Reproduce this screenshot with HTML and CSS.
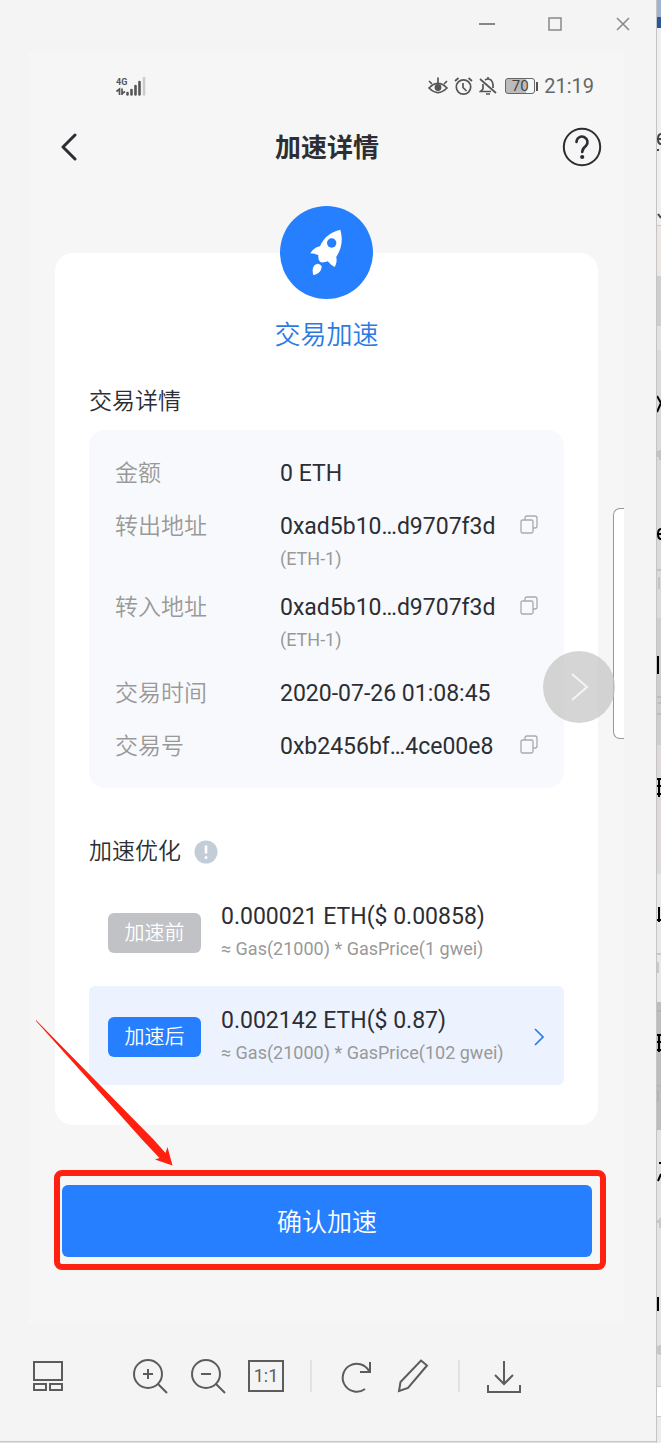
FILE: index.html
```html
<!DOCTYPE html>
<html lang="zh-CN">
<head>
    <meta charset="UTF-8">
    <meta name="viewport" content="width=device-width, initial-scale=1.0">
    <title>加速详情</title>
    <link rel="stylesheet" href="styles.css">
</head>
<body>
    <div class="window">
        <header class="titlebar">
            <button type="button" aria-label="最小化">
                <svg width="16" height="16" viewBox="0 0 16 16"><path d="M0 8h16" stroke-width="2"/></svg>
            </button>
            <button type="button" aria-label="最大化">
                <svg width="16" height="16" viewBox="0 0 16 16"><path d="M2 2h12v12H2z"/></svg>
            </button>
            <button type="button" aria-label="关闭">
                <svg width="16" height="16" viewBox="0 0 16 16"><path d="M2 2l12 12M14 2L2 14"/></svg>
            </button>
        </header>

        <main class="phone">
            <div class="status">
                <svg class="signal" width="30" height="20" viewBox="0 0 30 20">
                    <text x="0" y="9">4G</text>
                    <path d="M3.500 19v-6L0.500 15.500M6 12.500V19M6 17.500L9 15.500" fill="none" stroke="#555" stroke-width="1.700"/>
                    <path d="M11.500 17v1.500M15.500 14v4.500M19.500 10v8.500M23.500 6v12.500" fill="none" stroke="#555" stroke-width="2.600" stroke-linecap="round"/>
                    <path d="M28 2v16.500" stroke="#ccc" stroke-width="2.600" stroke-linecap="round"/>
                </svg>
                <div class="status-right">
                    <svg width="20" height="20" viewBox="0 0 20 20">
                        <path d="M1 12q9-9 18 0-9 9-18 0zM1 5l3 3M19 5l-3 3M10 1.500V7"/>
                        <circle cx="10" cy="11.500" r="3.400" class="solid"/>
                    </svg>
                    <svg width="19" height="20" viewBox="0 0 19 20">
                        <circle cx="9.500" cy="11" r="7.200"/>
                        <path d="M9 7v4.500l3.500 3.500M1 5l3.500-3M18 5l-3.500-3"/>
                    </svg>
                    <svg width="18" height="20" viewBox="0 0 18 20">
                        <path d="M1 3l16 14M4 8v5l-2.500 2.500H12M6 4q3-2 6 0 2 2 2 5v3M9 1v2M7 18h4"/>
                    </svg>
                    <span class="battery"><span>70</span></span>
                    <time>21:19</time>
                </div>
            </div>

            <nav class="nav">
                <button type="button" class="back" aria-label="返回">
                    <svg width="18" height="28" viewBox="0 0 18 28"><path d="M15 2L3 14l12 12"/></svg>
                </button>
                <h1>加速详情</h1>
                <button type="button" class="help" aria-label="帮助">
                    <svg width="40" height="40" viewBox="0 0 40 40">
                        <circle cx="20" cy="20" r="18.200"/>
                        <path d="M14.500 15a5.500 5.500 0 1 1 9.500 3.800q-3.800 3.200-3.800 6.200"/>
                        <circle cx="20.200" cy="30" r="2.100" class="dot"/>
                    </svg>
                </button>
            </nav>

            <section class="card">
                <div class="rocket">
                    <svg width="93" height="93" viewBox="0 0 93 93">
                        <path d="M60.300 23.700C51 26 44 31 40 40.300 36 41 33 43 30.300 47.300c3 0 5.500 1 8 1.700 0 3 0 5 2 7 2 1 5 0 7.400-.7 2 2 4 4.500 7 5.700 1.500-3 2.500-6 1.500-10 5.500-8 7-17 4.100-27.300z" fill="#fff"/>
                        <circle cx="51.700" cy="37" r="4.700" fill="#267fff"/>
                        <path d="M37.700 57.700c-4.500 1-6 5-4.400 11.300 5-.5 8-3.500 8.400-8.700-1-1.500-2.500-2.300-4-2.600z" fill="#fff"/>
                    </svg>
                </div>
                <h2 class="card-title">交易加速</h2>

                <h3>交易详情</h3>
                <dl class="details">
                    <div class="detail-row">
                        <dt>金额</dt>
                        <dd>0 ETH</dd>
                    </div>
                    <div class="detail-row">
                        <dt>转出地址</dt>
                        <dd>0xad5b10…d9707f3d <small>(ETH-1)</small></dd>
                        <dd class="action">
                            <button type="button" class="copy" aria-label="复制转出地址">
                                <svg width="18" height="19" viewBox="0 0 18 19"><path d="M5 5V3q0-2 2-2h8q2 0 2 2v8q0 2-2 2h-2"/><rect x="1" y="5" width="12" height="13" rx="1.500"/></svg>
                            </button>
                        </dd>
                    </div>
                    <div class="detail-row after-address">
                        <dt>转入地址</dt>
                        <dd>0xad5b10…d9707f3d <small>(ETH-1)</small></dd>
                        <dd class="action">
                            <button type="button" class="copy" aria-label="复制转入地址">
                                <svg width="18" height="19" viewBox="0 0 18 19"><path d="M5 5V3q0-2 2-2h8q2 0 2 2v8q0 2-2 2h-2"/><rect x="1" y="5" width="12" height="13" rx="1.500"/></svg>
                            </button>
                        </dd>
                    </div>
                    <div class="detail-row">
                        <dt>交易时间</dt>
                        <dd>2020-07-26 01:08:45</dd>
                    </div>
                    <div class="detail-row">
                        <dt>交易号</dt>
                        <dd>0xb2456bf…4ce00e8</dd>
                        <dd class="action">
                            <button type="button" class="copy" aria-label="复制交易号">
                                <svg width="18" height="19" viewBox="0 0 18 19"><path d="M5 5V3q0-2 2-2h8q2 0 2 2v8q0 2-2 2h-2"/><rect x="1" y="5" width="12" height="13" rx="1.500"/></svg>
                            </button>
                        </dd>
                    </div>
                </dl>

                <div class="section-head">
                    <h3>加速优化</h3>
                    <button type="button" class="info" aria-label="说明">
                        <svg width="24" height="24" viewBox="0 0 24 24">
                            <circle cx="12" cy="12" r="11.500" fill="#c3cdd8"/>
                            <path d="M12 5.500v8" stroke="#fff" stroke-width="2.600"/>
                            <circle cx="12" cy="17.500" r="1.500" fill="#fff"/>
                        </svg>
                    </button>
                </div>
                <div class="option">
                    <span class="badge">加速前</span>
                    <span class="fee">0.000021 ETH($ 0.00858)<small>≈ Gas(21000) * GasPrice(1 gwei)</small></span>
                </div>
                <button type="button" class="option active">
                    <span class="badge">加速后</span>
                    <span class="fee">0.002142 ETH($ 0.87)<small>≈ Gas(21000) * GasPrice(102 gwei)</small></span>
                    <svg width="10" height="18" viewBox="0 0 10 18"><path d="M1 1l8 8-8 8"/></svg>
                </button>
            </section>

            <div class="confirm-frame">
                <svg class="arrow" width="140" height="150" viewBox="0 0 140 150">
                    <path d="M0 2l118 120 11.500 13 2-6L136.500 147.500 119 141.500l4.500-1.500L106.500 122 0 3z"/>
                </svg>
                <button type="button" class="confirm">确认加速</button>
            </div>

            <div class="drawer"></div>
            <button type="button" class="next" aria-label="下一张">
                <svg width="20" height="30" viewBox="0 0 20 30"><path d="M3 2l15 13L3 28"/></svg>
            </button>
        </main>

        <footer class="toolbar">
            <button type="button" class="thumbs" aria-label="缩略图">
                <svg width="36" height="36" viewBox="0 0 36 36"><path d="M4 4h28v18H4zM4 26h12v6H4zM20 26h12v6H20z"/></svg>
            </button>
            <button type="button" aria-label="放大">
                <svg width="36" height="36" viewBox="0 0 36 36"><circle cx="16" cy="16" r="14"/><path d="M26 26l9 9M11 16h10M16 11v10"/></svg>
            </button>
            <button type="button" aria-label="缩小">
                <svg width="36" height="36" viewBox="0 0 36 36"><circle cx="16" cy="16" r="14"/><path d="M26 26l9 9M11 16h10"/></svg>
            </button>
            <button type="button" class="actual">1:1</button>
            <span class="sep"></span>
            <button type="button" aria-label="旋转">
                <svg width="36" height="36" viewBox="0 0 36 36"><path d="M27 31A14 14 0 1 1 31 13M32 4v10H22"/></svg>
            </button>
            <button type="button" aria-label="编辑">
                <svg width="36" height="36" viewBox="0 0 36 36"><path d="M25 2.500l6 5L12 30l-9 3 1.500-9z"/></svg>
            </button>
            <span class="sep"></span>
            <button type="button" aria-label="下载">
                <svg width="36" height="36" viewBox="0 0 36 36"><path d="M18 3v22M9 17l9 9 9-9M2 27v7h32v-7"/></svg>
            </button>
        </footer>
    </div>

    <!-- sliver of the window behind -->
    <aside class="behind">
        <svg width="4" height="1443" viewBox="0 0 4 1443">
            <path d="M4 134q-3 0-3 5t3 5M0 139h4M0 150h2M1 214l3 4" stroke="#444"/>
            <path d="M0 396l4 7-4 9M4 529q-3 0-3 5t3 5M0 534h4M1 656v18M0 779h4M2 779v18M0 786h4M0 794h4M2 907v15M0 920h4M0 1035h4M2 1035v17M0 1042h4M0 1050h4M2 1163h2M4 1174l-3 7M1 1297v14" stroke="#000"/>
            <path d="M1 451v6M3 450v10M0 570h4M2 577v12M0 697h4M1 703h3M0 714h4M0 954h4M1 962v11M0 1011h4M0 1086h4M1 1090v12M1 1220v3M3 1218v10M1 1346v8M3 1345v10" stroke="#a5adb8" stroke-width="1"/>
        </svg>
    </aside>
</body>
</html>
```
FILE: styles.css
```css
* {
    box-sizing: border-box;
}

body {
    margin: 0;
    min-height: 100vh;
    display: flex;
    background: #e0e0e0;
    color: #2c2e33;
    font-family: Roboto, "Noto Sans CJK SC", sans-serif;
    font-size: 23px;
    line-height: 32px;
}

button {
    margin: 0;
    padding: 0;
    border: none;
    background: none;
    color: inherit;
    font: inherit;
    cursor: pointer;
}

svg {
    display: block;
    fill: none;
}

h1, h2, h3, dl, dd {
    margin: 0;
}

.window {
    flex: 1;
    min-width: 0;
    margin-bottom: 1px;
    background: #f4f4f4;
    border-bottom: 1px solid #c8c8c8;
}

.titlebar {
    display: flex;
    justify-content: flex-end;
    align-items: center;
    gap: 52px;
    height: 52px;
    padding: 0 25px 4px 0;
}

.titlebar svg {
    stroke: #888;
    stroke-width: 1.5;
}

/* phone screen */
.phone {
    position: relative;
    margin: 0 32px 0 29px;
    padding: 0 26px 53px;
    background: #f6f6f6;
}

.status {
    display: flex;
    justify-content: space-between;
    align-items: center;
    height: 68px;
    padding: 0 4px 0 61px;
}

.signal text {
    font-size: 9px;
    font-weight: 700;
    fill: #555;
}

.status-right {
    display: flex;
    align-items: center;
    gap: 6px;
    color: #666;
    font-size: 20px;
}

.status-right svg {
    stroke: #555;
    stroke-width: 1.7;
}

.status-right .solid {
    fill: #555;
    stroke: none;
}

.battery {
    position: relative;
    width: 30px;
    height: 16px;
    margin: 0 3px 0 2px;
    border: 1px solid #666;
    border-radius: 3px;
    background: linear-gradient(90deg, #bbb 70%, #f6f6f6 70%);
    color: #444;
    font-size: 15px;
    line-height: 15px;
    text-align: center;
}

.battery::after {
    content: "";
    position: absolute;
    top: 3px;
    right: -4px;
    width: 2px;
    height: 9px;
    background: #555;
}

.nav {
    display: flex;
    justify-content: space-between;
    align-items: center;
    height: 54px;
    padding-left: 5px;
}

.nav svg {
    stroke: #2c2e33;
    stroke-width: 2;
}

.nav .back {
    width: 32px;
}

.nav .back svg {
    stroke-width: 3;
    stroke-linecap: round;
    stroke-linejoin: round;
}

.nav .help {
    margin-right: -4px;
}

.nav .help path {
    stroke-width: 2.6;
    stroke-linecap: round;
}

.nav .dot {
    fill: #2c2e33;
    stroke: none;
}

.nav h1 {
    padding-top: 2px;
    font-size: 26px;
    font-weight: 700;
}

/* card */
.card {
    margin-top: 79px;
    padding: 0 34px 40px;
    background: #fff;
    border-radius: 18px;
}

.rocket {
    position: relative;
    top: -47px;
    width: 93px;
    margin: 0 auto -47px;
    border-radius: 50%;
    background: #267fff;
}

.card-title {
    margin: 18px 0 33px;
    color: #2b7ae6;
    font-size: 26px;
    font-weight: 350;
    line-height: 36px;
    text-align: center;
}

h3 {
    font-size: 23px;
    font-weight: 350;
}

.details {
    margin: 12px 0 48px;
    padding: 28px 26px 25px;
    background: #f8f9fc;
    border-radius: 16px;
}

.detail-row {
    display: grid;
    grid-template-columns: 165px 1fr auto;
}

.detail-row + .detail-row {
    margin-top: 21px;
}

.detail-row + .after-address {
    margin-top: 17px;
}

.after-address + .detail-row {
    margin-top: 22px;
}

.detail-row dt {
    color: #999;
    font-weight: 350;
}

.detail-row dd {
    white-space: nowrap;
}

small {
    display: block;
    color: #999;
    font-size: 18px;
}

.copy {
    display: block;
    margin-top: 4px;
}

.copy svg {
    stroke: #aaa;
    stroke-width: 1.3;
}

.section-head {
    display: flex;
    align-items: center;
    gap: 13px;
    margin-bottom: 14px;
}

.option {
    display: flex;
    align-items: center;
    gap: 20px;
    width: 100%;
    padding: 19px 20px 16px 19px;
    border-radius: 6px;
    text-align: left;
}

.option.active {
    margin-top: 5px;
    background: #ecf3ff;
}

.option svg {
    margin-left: auto;
    stroke: #2b7ae6;
    stroke-width: 1.7;
}

.badge {
    width: 93px;
    border-radius: 6px;
    background: #c0c2c6;
    color: #fff;
    font-size: 20px;
    font-weight: 350;
    line-height: 40px;
    text-align: center;
}

.active .badge {
    background: #267fff;
}

.fee {
    white-space: nowrap;
}

/* confirm button with the marker around it */
.confirm-frame {
    position: relative;
    margin: 45px -8px 0 -1px;
    padding: 9px 8px 7px 2px;
    border: 6px solid #ff2010;
    border-radius: 8px;
}

.confirm {
    display: block;
    width: 100%;
    padding-top: 4px;
    border-radius: 6px;
    background: #267fff;
    color: #fff;
    font-size: 25px;
    font-weight: 350;
    line-height: 68px;
}

.arrow {
    position: absolute;
    top: -158px;
    left: -24px;
    fill: #ff2010;
    pointer-events: none;
}

.drawer {
    position: absolute;
    top: 456px;
    right: 0;
    width: 11px;
    height: 231px;
    border: 1px solid #999;
    border-right: none;
    border-radius: 7px 0 0 7px;
    background: #fff;
}

.next {
    position: absolute;
    top: 599px;
    right: 9px;
    display: flex;
    justify-content: center;
    align-items: center;
    width: 72px;
    height: 72px;
    border-radius: 50%;
    background: rgba(195, 195, 195, 0.7);
}

.next svg {
    stroke: #f4f4f4;
    stroke-width: 2;
}

/* viewer toolbar */
.toolbar {
    display: flex;
    align-items: center;
    gap: 22px;
    height: 118px;
    padding: 0 0 12px 30px;
}

.toolbar svg {
    stroke: #5c5c5c;
    stroke-width: 2;
}

.toolbar .thumbs {
    margin-right: 44px;
}

.toolbar .actual {
    width: 36px;
    height: 32px;
    border: 2px solid #5c5c5c;
    color: #5c5c5c;
    font-size: 18px;
    line-height: 28px;
}

.sep {
    width: 2px;
    height: 32px;
    margin: 0 4px;
    background: #e2e2e2;
}

.behind {
    position: relative;
    width: 5px;
    overflow: hidden;
    border-left: 1px solid #c4c4c4;
    background: linear-gradient(#9fb3d3 17px, #2b579a 17px 28px, #efefef 28px 225px, #c8c8c8 225px 226px, #ece7e4 226px 276px, #cfcdcd 276px 326px, #e2e2e2 326px 350px, #dadada 350px 618px, #cfcdcd 618px 745px, #dedad9 745px 874px, #e8e8e8 874px 1002px, #bdbdbd 1002px 1130px, #e4e2e2 1130px 1386px, #c8c8c8 1386px 1387px, #fff 1387px 1416px, #c8c8c8 1416px 1417px, #ececec 1417px);
}

.behind svg {
    position: absolute;
    top: 0;
    left: 0;
    stroke-width: 2;
}
```
